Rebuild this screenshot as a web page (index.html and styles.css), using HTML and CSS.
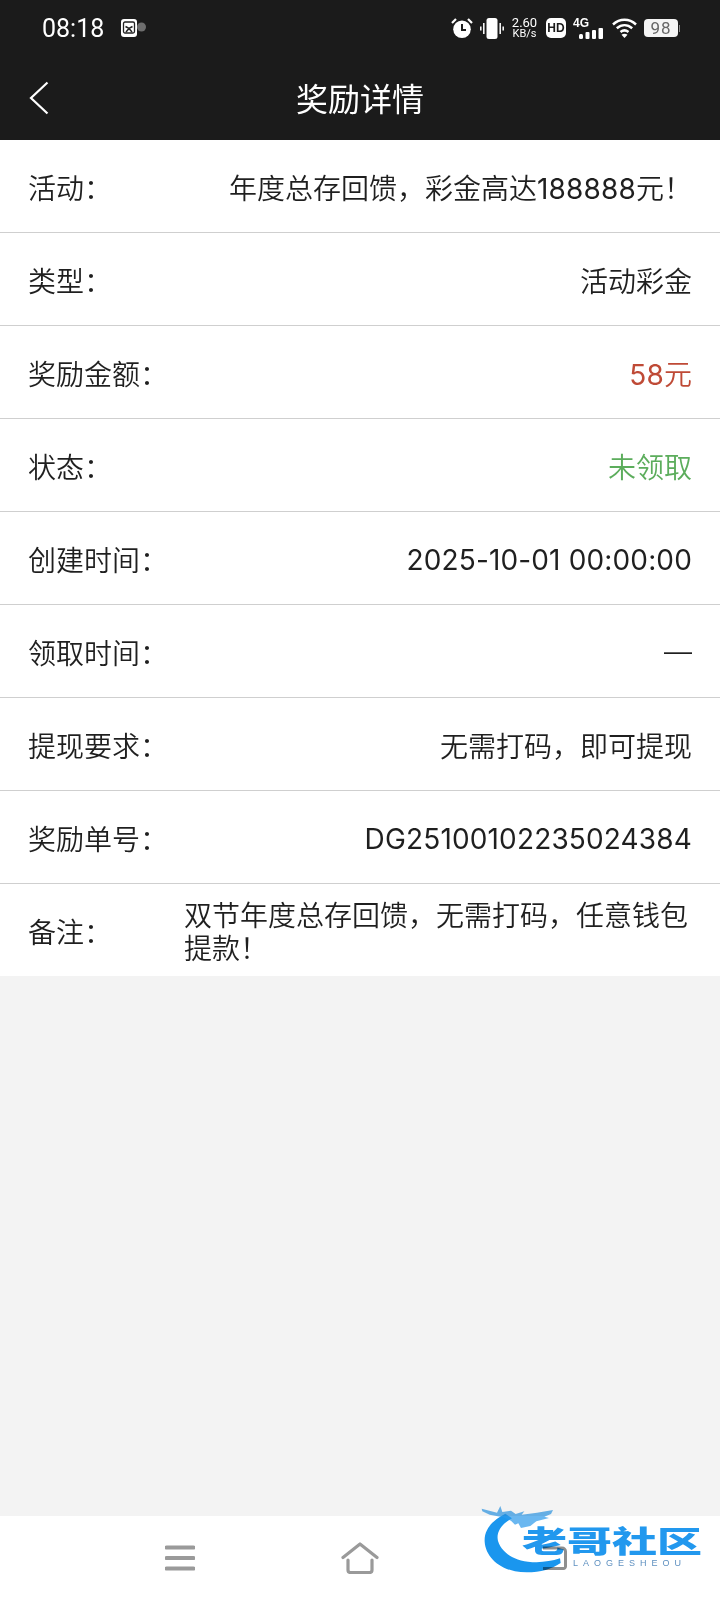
FILE: index.html
```html
<!DOCTYPE html>
<html lang="zh-CN">
<head>
  <meta charset="UTF-8">
  <title>奖励详情</title>
  <link rel="stylesheet" href="styles.css">
</head>
<body>
  <div class="page">
    <div class="status-bar">
      <div class="status-left">
        <span class="clock">08:18</span>
        <svg class="app-icon" width="26" height="18" viewBox="0 0 26 18">
          <rect x="0" y="0" width="16" height="18" rx="3" fill="#fff"/>
          <rect x="2.500" y="3" width="11" height="11" rx="1.500" fill="none" stroke="#222" stroke-width="1.300"/>
          <path d="M4.500 7.500l3.500 2 3.500-2M5 13l3-3.500 3 3.500" fill="none" stroke="#222" stroke-width="1.500"/>
          <circle cx="20.500" cy="8" r="4.500" fill="#6e6e6e"/>
        </svg>
      </div>
      <div class="status-right">
        <svg width="22" height="20" viewBox="0 0 22 20">
          <path d="M1 5l4-4M21 5l-4-4" stroke="#fff" stroke-width="2.200" fill="none"/>
          <circle cx="11" cy="11.200" r="8.800" fill="#fff"/>
          <path d="M11 6v6h4" stroke="#1b1b1b" stroke-width="2" fill="none"/>
        </svg>
        <svg width="24" height="21" viewBox="0 0 24 21">
          <rect x="6.500" y="0" width="11" height="21" rx="2.500" fill="#fff"/>
          <path d="M3.800 5v11M20.200 5v11M.8 8.500v4M23.200 8.500v4" stroke="#fff" stroke-width="1.500"/>
        </svg>
        <div class="speed"><span>2.60</span><span class="speed-unit">KB/s</span></div>
        <div class="hd">HD</div>
        <div class="net">
          <span class="net-label">4G</span>
          <svg class="net-bars" width="24" height="11" viewBox="0 0 24 11">
            <rect x="0" y="6" width="4" height="5" rx="1.500" fill="#fff"/>
            <rect x="6.500" y="4" width="4" height="7" rx="1" fill="#fff"/>
            <rect x="13" y="2" width="4" height="9" rx="1" fill="#fff"/>
            <rect x="19.500" y="0" width="4.500" height="11" rx="1" fill="#fff"/>
          </svg>
        </div>
        <svg width="25" height="20" viewBox="0 0 25 20">
          <path d="M1 6.500C7.800 .3 17.200 .3 24 6.500M4.800 10.300C9.500 6.200 15.500 6.200 20.200 10.300M8.500 14c2.500-2 5.500-2 8 0" fill="none" stroke="#fff" stroke-width="2.500"/>
          <path d="M12.500 20l-3-3.200c1.800-1.300 4.200-1.300 6 0z" fill="#fff"/>
        </svg>
        <div class="battery"><span class="battery-level">98</span><span class="battery-tip"></span></div>
      </div>
    </div>

    <header class="title-bar">
      <svg class="back" width="20" height="34" viewBox="0 0 20 34">
        <path d="M18.500 1.500L2 17l16.500 15.500" fill="none" stroke="#fff" stroke-width="2.200"/>
      </svg>
      <h1>奖励详情</h1>
    </header>

    <main class="details">
      <div class="row"><span class="label">活动：</span><span class="value">年度总存回馈，彩金高达<span class="num">188888</span>元！</span></div>
      <div class="row"><span class="label">类型：</span><span class="value">活动彩金</span></div>
      <div class="row"><span class="label">奖励金额：</span><span class="value red"><span class="num">58</span>元</span></div>
      <div class="row"><span class="label">状态：</span><span class="value green">未领取</span></div>
      <div class="row"><span class="label">创建时间：</span><span class="value num num-row">2025-10-01 00:00:00</span></div>
      <div class="row"><span class="label">领取时间：</span><span class="value">—</span></div>
      <div class="row"><span class="label">提现要求：</span><span class="value">无需打码，即可提现</span></div>
      <div class="row"><span class="label">奖励单号：</span><span class="value num num-row">DG25100102235024384</span></div>
      <div class="row row-note"><span class="label">备注：</span><span class="note">双节年度总存回馈，无需打码，任意钱包提款！</span></div>
    </main>

    <div class="spacer"></div>

    <nav class="nav-bar">
      <svg width="30" height="26" viewBox="0 0 30 26">
        <path d="M1.500 2.500h27M1.500 13h27M1.500 23.500h27" stroke="#9a9a9a" stroke-width="4" stroke-linecap="round"/>
      </svg>
      <svg width="38" height="32" viewBox="0 0 38 32">
        <path d="M2 15.500L19 2l17 13.500M7 18v10c0 1.500 1 2.500 2.500 2.500h19c1.500 0 2.500-1 2.500-2.500V18" fill="none" stroke="#9a9a9a" stroke-width="3.200" stroke-linecap="round" stroke-linejoin="round"/>
      </svg>
      <svg width="26" height="24" viewBox="0 0 26 24">
        <path d="M2 2h19c2 0 3.500 1.500 3.500 3.500v15c0 1-1 2-2 2H2" fill="none" stroke="#8f8f8f" stroke-width="3"/>
      </svg>
    </nav>

    <div class="watermark">
      <svg class="dragon" width="250" height="90" viewBox="0 0 750 270">
        <path d="M106 56C62 78 42 108 44 140c3 48 50 92 126 92 42 0 76-10 102-28l-2-14c-30 10-62 14-96 10-48-6-80-30-90-62-6-24 8-50 42-68z" fill="#1a96ee"/>
        <path d="M35 41l46 12 10-20 6 18 26-4 14 10 26-8-8 10 46-6 48-8-6 12-20 8 14 4-38 10-18 14-28 6-8-14-10 4-12-12-24-10-40-8-22-10z" fill="#2b98ea" opacity=".7"/>
      </svg>
      <div class="wm-title">老哥社区</div>
      <div class="wm-sub">LAOGESHEOU</div>
    </div>
  </div>
</body>
</html>
```

FILE: styles.css
```css
* {
  box-sizing: border-box;
}
body {
  margin: 0;
  font-family: Inter, "Noto Sans CJK SC", sans-serif;
  background: #f3f3f3;
}
.page {
  position: relative;
  width: 720px;
  height: 1600px;
  display: flex;
  flex-direction: column;
  overflow: hidden;
}

/* status bar */
.status-bar {
  height: 56px;
  background: #1b1b1b;
  color: #fff;
  display: flex;
  justify-content: space-between;
  align-items: center;
  padding: 0 40px 0 42px;
}
.status-left {
  display: flex;
  align-items: center;
  gap: 17px;
}
.clock {
  font-family: Roboto, sans-serif;
  font-size: 25px;
}
.status-right {
  display: flex;
  align-items: center;
}
.status-right > * {
  margin-left: 7px;
}
.speed {
  display: flex;
  flex-direction: column;
  align-items: center;
  width: 25px;
  margin-left: 8px;
  font-family: Roboto, sans-serif;
  font-size: 13px;
  line-height: 11px;
}
.speed-unit {
  font-size: 11px;
}
.hd {
  width: 20px;
  height: 20px;
  margin-left: 9px;
  background: #fff;
  color: #1b1b1b;
  border-radius: 5px;
  font-family: "Liberation Sans", sans-serif;
  font-size: 12px;
  font-weight: 700;
  line-height: 20px;
  text-align: center;
}
.net {
  display: flex;
  flex-direction: column;
  width: 30px;
  height: 21px;
}
.net-label {
  font-family: "Liberation Sans", sans-serif;
  font-size: 12px;
  font-weight: 700;
  line-height: 10px;
}
.net-bars {
  align-self: flex-end;
}
.status-right > .net + svg {
  margin-left: 9px;
}
.battery {
  display: flex;
  align-items: center;
  gap: 1px;
}
.battery-level {
  width: 34px;
  height: 18px;
  background: #f4f4f4;
  color: #666;
  border-radius: 4px;
  font-family: Roboto, sans-serif;
  font-size: 17px;
  line-height: 18px;
  text-align: center;
  letter-spacing: 1px;
}
.battery-tip {
  width: 1px;
  height: 7px;
  background: #888;
}

/* title */
.title-bar {
  position: relative;
  height: 84px;
  background: #1b1b1b;
  display: flex;
  align-items: center;
  justify-content: center;
  padding-bottom: 3px;
}
.title-bar h1 {
  margin: 0;
  color: #fff;
  font-size: 32px;
  font-weight: 400;
}
.back {
  position: absolute;
  left: 29px;
  top: 25px;
}

/* rows */
.details {
  background: #fff;
}
.row {
  height: 93px;
  display: flex;
  align-items: center;
  justify-content: space-between;
  padding: 2px 28px 0;
  border-bottom: 1px solid #cfcfcf;
  font-size: 28px;
  font-weight: 350;
  color: #1f1f1f;
}
.label {
  flex: none;
}
.value {
  text-align: right;
}
.num {
  font-weight: 400;
  letter-spacing: 0.15px;
}
.num-row {
  padding-top: 2px;
}
.red {
  color: #bf4a36;
}
.green {
  color: #5cad5c;
}
.row-note {
  height: 92px;
  border-bottom: none;
  justify-content: flex-start;
  padding-top: 1px;
}
.row-note .label {
  width: 156px;
}
.note {
  flex: 1;
  padding-top: 4px;
  line-height: 33px;
}
.spacer {
  flex: 1;
}

/* bottom nav */
.nav-bar {
  height: 84px;
  background: #fff;
  display: flex;
  align-items: center;
  padding-left: 165px;
  gap: 146px;
}
.nav-bar svg:last-child {
  margin-left: 16px;
}

/* watermark over the nav bar */
.watermark {
  position: absolute;
  left: 470px;
  top: 1495px;
  width: 250px;
  height: 90px;
  mix-blend-mode: multiply;
  filter: blur(0.7px);
}
.dragon {
  position: absolute;
  left: 0;
  top: 0;
}
.wm-title {
  position: absolute;
  left: 52px;
  top: 31px;
  color: #2298ee;
  font-size: 45px;
  line-height: 45px;
  font-weight: 900;
  white-space: nowrap;
  transform: scaleY(0.66);
  transform-origin: left top;
}
.wm-sub {
  position: absolute;
  left: 103px;
  top: 64px;
  color: #5e90c0;
  font-family: "Liberation Sans", sans-serif;
  font-size: 9px;
  line-height: 8px;
  letter-spacing: 5px;
  white-space: nowrap;
}
```
